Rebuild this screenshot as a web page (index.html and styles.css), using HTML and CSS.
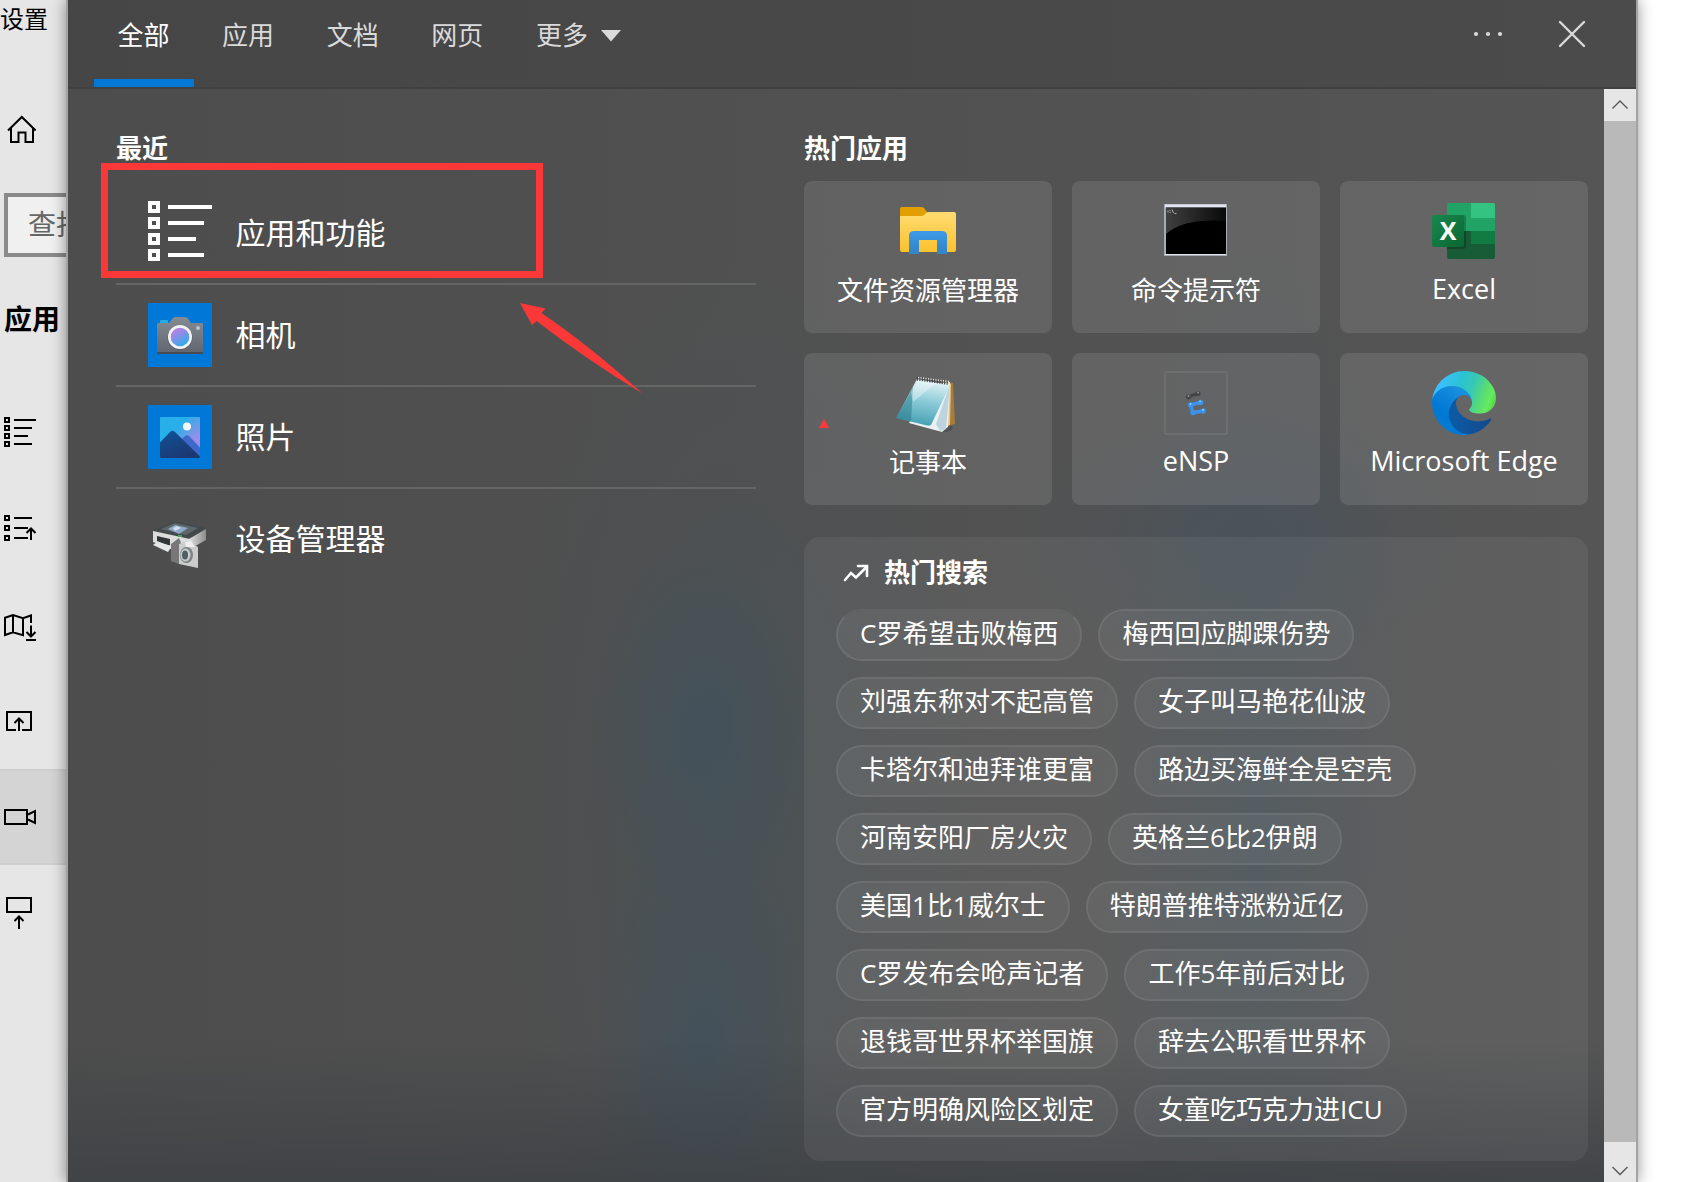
FILE: index.html
```html
<!DOCTYPE html>
<html lang="zh-CN">
<head>
<meta charset="utf-8">
<title>搜索</title>
<link rel="stylesheet" href="styles.css">
</head>
<body>
<aside class="settings">
  <div class="settings-title">设置</div>
  <svg class="home" width="40" height="40" viewBox="0 110 40 40"><path d="M8 130.5 21.8 117 35.6 130.5M11 128V142H18.500V132.500H25.500V142H33V128"/></svg>
  <div class="find">查找</div>
  <h2 class="settings-heading">应用</h2>
  <nav class="side-nav">
    <a class="side-item"><svg width="40" height="96" viewBox="0 385 40 96"><path d="M5 418h4v4h-4zM5 426h4v4h-4zM5 434h4v4h-4zM5 442h4v4h-4zM14 420h22M14 428h18M14 436h14M14 444h18"/></svg></a>
    <a class="side-item"><svg width="40" height="96" viewBox="0 481 40 96"><path d="M5 516h4v4h-4zM5 526h4v4h-4zM5 536h4v4h-4zM14 518h18M14 528h14M14 538h14M31 540V529M26.500 533 31 528.500 35.500 533"/></svg></a>
    <a class="side-item"><svg width="40" height="96" viewBox="0 577 40 96"><path d="M31 623V615.500L23 618.200 13 615 5 617.800V635L13 632.200 23 635.200V618M13 615V632M31 625.500V636M26.500 632 31 636.500 35.500 632M26 640H36"/></svg></a>
    <a class="side-item"><svg width="40" height="96" viewBox="0 673 40 96"><path d="M16 730H7V712H31V730H22M19 731V719M14.500 723 19 718.500 23.500 723"/></svg></a>
    <a class="side-item selected"><svg width="40" height="96" viewBox="0 769 40 96"><path d="M5 810H27V824H5ZM28 814.500 35 811V823L28 819.500"/></svg></a>
    <a class="side-item"><svg width="40" height="96" viewBox="0 865 40 96"><path d="M7 898H31V912H7ZM19 929V917M14.500 921 19 916.500 23.500 921"/></svg></a>
  </nav>
</aside>

<main class="search-panel">
  <header class="tabs">
    <a class="tab active">全部</a>
    <a class="tab">应用</a>
    <a class="tab">文档</a>
    <a class="tab">网页</a>
    <a class="tab">更多<svg class="caret" width="20" height="12" viewBox="0 0 20 12"><path d="M0 0H20L10 11.500Z"/></svg></a>
    <span class="spacer"></span>
    <svg class="window-tools" width="120" height="40" viewBox="1470 14 120 40"><circle cx="1476" cy="34" r="2.100"/><circle cx="1488" cy="34" r="2.100"/><circle cx="1500" cy="34" r="2.100"/><path d="M1560 22 1584 46M1584 22 1560 46"/></svg>
  </header>
  <div class="body">
    <section class="recent">
      <h2>最近</h2>
      <ul>
        <li><svg width="64" height="64" viewBox="148 201 64 64"><path fill="none" stroke="#fff" stroke-width="4" d="M150 203h8v8h-8zM150 219h8v8h-8zM150 235h8v8h-8zM150 251h8v8h-8zM168 207h44M168 223h36M168 239h28M168 255h36"/></svg><span>应用和功能</span></li>
        <li><svg width="64" height="64" viewBox="0 0 64 64">
          <defs>
            <linearGradient id="cam" x2="0" y2="1"><stop stop-color="#858b93"/><stop offset="1" stop-color="#62676f"/></linearGradient>
            <linearGradient id="lens" x1=".2" y1="0" x2=".8" y2="1"><stop offset=".15" stop-color="#b580e4"/><stop offset="1" stop-color="#22b2ee"/></linearGradient>
          </defs>
          <path fill="#0078d7" d="M0 0h64v64H0z"/><rect x="12" y="17" width="8" height="6" rx="1" fill="#29aae6"/>
          <path fill="url(#cam)" d="M10 20H21L25 15Q26 14 27.500 14H37Q38.500 14 39.500 15L43 20H54Q55 20 55 21V50H9V21Q9 20 10 20Z"/><path fill="#484c52" d="M9 49h46v1q0 1-1 1H10q-1 0-1-1z"/>
          <circle cx="32" cy="35" r="12.500" fill="#555b64" opacity=".6"/><circle cx="32" cy="34" r="12" fill="#f3f3f4"/><circle cx="32" cy="34" r="9.300" fill="url(#lens)"/><circle cx="50" cy="25" r="2" fill="#b9c3cc"/></svg><span>相机</span></li>
        <li><svg width="64" height="64" viewBox="0 0 64 64">
          <defs>
            <linearGradient id="sky" x2="1" y2="1"><stop offset=".35" stop-color="#28afea"/><stop offset=".75" stop-color="#a48ae6"/></linearGradient>
            <linearGradient id="hill" x2=".5" y2="1"><stop stop-color="#0f5396"/><stop offset="1" stop-color="#1c3873"/></linearGradient>
          </defs>
          <path fill="#0078d7" d="M0 0h64v64H0z"/><rect x="12" y="12" width="40" height="41" rx="1" fill="url(#sky)"/>
          <path fill="#3f68cb" d="M28 40 36.500 31.500Q39 29 41.500 31.500L52 42.500V52H40Z"/>
          <path fill="url(#hill)" d="M12 37.500 22 27Q24.500 24.500 27 27L52 51.500Q52 53 51 53H13Q12 53 12 52Z"/><circle cx="39" cy="21.500" r="4" fill="#f3f7fb"/></svg><span>照片</span></li>
        <li><svg class="device" width="64" height="64" viewBox="0 0 64 64">
          <defs><linearGradient id="metal"><stop stop-color="#e2e2e2"/><stop offset="1" stop-color="#8c8c8c"/></linearGradient></defs>
          <path fill="#434a4d" d="M6 23 26 14 58 21 42 33Z"/><path fill="#5d686b" d="M13 22 27 16 50 21 38 28Z"/><path fill="#8fa9c6" d="M20 22 27 18 40 21 31 27Z"/><path fill="#cfe2f3" d="M25 21 29 19 33 21 27 24Z"/>
          <path fill="#dcdcdc" d="M5 24 42 32V43L22 42 5 35Z"/><path fill="url(#metal)" d="M41 32 58 22V33L42 42Z"/><path fill="#303638" d="M9 29 22 32V39L9 34Z"/><path fill="#e4e7e8" d="M9 35 24 39 20 45 5 38Z"/><path fill="#49a451" d="M30 28h4v2h-4z"/>
          <path fill="#777" d="M23 37 31 31 33 36 31 57 23 54Z"/><path fill="#ccc" d="M31 37 39 34 50 40V61L31 57Z"/><path fill="#eee" d="M37 35 43 34 47 40H38Z"/>
          <ellipse cx="38.500" cy="48" rx="6.500" ry="8" fill="#7d8383"/><ellipse cx="37.500" cy="48" rx="5" ry="6.500" fill="#c9cdcd"/><ellipse cx="37" cy="48" rx="3" ry="4.500" fill="#4f6064"/></svg><span>设备管理器</span></li>
      </ul>
    </section>
    <section class="popular">
      <h2>热门应用</h2>
      <div class="tiles">
        <a class="tile"><svg width="64" height="64" viewBox="896 199 64 64">
          <defs><linearGradient id="fold" x2="0" y2="1"><stop stop-color="#ffdc72"/><stop offset="1" stop-color="#fbc12d"/></linearGradient><linearGradient id="clip" x2="0" y2="1"><stop stop-color="#3c9ae6"/><stop offset="1" stop-color="#3383c5"/></linearGradient></defs>
          <path fill="#e2a000" d="M900 209q0-2 2-2h19q2 0 3 1l3 4v7h-27z"/><path fill="url(#fold)" d="M900 216H921Q923 216 924 215L926 213Q927 212 929 212H954Q956 212 956 214V250Q956 252 954 252H902Q900 252 900 250Z"/>
          <path fill="url(#clip)" d="M909 254V236Q909 231 914 231H942Q947 231 947 236V254H937V240H919V254Z"/></svg><span>文件资源管理器</span></a>
        <a class="tile"><svg width="64" height="64" viewBox="1164 199 64 64">
          <defs><linearGradient id="glare"><stop stop-color="#404040"/><stop offset="1" stop-color="#090909"/></linearGradient></defs>
          <path fill="#a7abb2" d="M1164 204h63v52h-63z"/><path fill="#e3e6f1" d="M1165 204.500h61v3h-61zM1165 254h61v1h-61z"/><path d="M1166 207.500h60V254h-60z"/><path fill="url(#glare)" d="M1166 208h60V221Q1184 218 1166 234Z"/><path stroke="#ccc" stroke-width=".8" fill="none" d="M1168 210.500v2M1170 210v1M1170 212v1M1172 209.500l1.500 3.500M1174.500 213.500h2"/></svg><span>命令提示符</span></a>
        <a class="tile latin"><svg width="64" height="64" viewBox="1432 199 64 64">
          <defs><linearGradient id="xl" x2="1" y2="1"><stop stop-color="#18884f"/><stop offset="1" stop-color="#0b6631"/></linearGradient></defs>
          <path fill="#185c37" d="M1447 229h48v28q0 2-2 2h-44q-2 0-2-2z"/><path fill="#21a366" d="M1447 205q0-2 2-2h22v28h-24z"/><path fill="#33c481" d="M1471 203h22q2 0 2 2v13h-24z"/><path fill="#21a366" d="M1471 218h24v13h-24z"/><path fill="#107c41" d="M1471 231h24v13h-24z"/><path fill="#185c37" d="M1447 231h24v26h-24z"/>
          <path fill="#000" opacity=".22" d="M1447 215h16q3 0 3 3v28q0 3-3 3h-16z"/><rect x="1432" y="215" width="32" height="32" rx="2" fill="url(#xl)"/><text x="1448" y="240" text-anchor="middle" class="excel-x">X</text></svg><span>Excel</span></a>
        <a class="tile"><svg width="64" height="64" viewBox="896 371 64 64">
          <defs><linearGradient id="note" x1=".5" y1="0" x2=".3" y2="1"><stop stop-color="#e3f2f6"/><stop offset=".45" stop-color="#8ccbd7"/><stop offset="1" stop-color="#3f9eb0"/></linearGradient></defs>
          <ellipse cx="943" cy="428" rx="10" ry="4" fill="#333" opacity=".35"/><path fill="#a77c3d" d="M941 381 953 383 955 424 948 426Z"/><path fill="#e7c67c" d="M948 383 951 384 950 425 947 426Z"/><path fill="#e9f1f4" d="M950 382 948 427 942 432 909 423 930 385Z"/><path fill="#bfd3dc" d="M950 384 946 429 940 431 936 424Z"/>
          <path fill="url(#note)" d="M917 379 950 385 931 425Q929 426 925 425L896 418Z"/><path fill="#1f7283" opacity=".45" d="M913 387 911 421 896 418Z"/><path fill="#fff" opacity=".35" d="M918 380 936 383 913 402 911 392Z"/>
          <path fill="none" stroke="#444" stroke-width="4" stroke-dasharray="1.200 1.300" d="M917 378.500 949 383"/><path fill="none" stroke="#e5e5e5" stroke-width="1.500" stroke-dasharray="1.200 1.300" d="M918 377.500 949 381.500"/></svg><span>记事本</span></a>
        <a class="tile latin"><svg width="64" height="64" viewBox="1164 371 64 64">
          <rect x="1165" y="372" width="62" height="62" rx="1" fill="none" stroke="#fff" stroke-opacity=".07" stroke-width="2"/>
          <g stroke-linecap="round" fill="none"><path stroke="#444" stroke-width="3" d="M1189 396.500 1198 393.500"/><path stroke="#444" stroke-width="5" d="M1188.500 397h.1M1198 393.500h.1"/><path stroke="#999" stroke-width="1.800" d="M1188.500 396h.1M1198 392.500h.1"/><path stroke="#3c92ea" stroke-width="3.500" d="M1200 402.500 1190.500 405 1193 412.500 1203 411"/><path stroke="#3c92ea" stroke-width="5.500" d="M1200.500 402.500h.1M1190.800 405h.1M1193 412.500h.1M1203 411h.1"/><path stroke="#8cc6ff" stroke-width="2" d="M1200 401.500h.1M1190.500 404h.1M1203 410h.1"/></g></svg><span>eNSP</span></a>
        <a class="tile latin"><svg width="64" height="64" viewBox="0 0 256 256">
          <defs>
            <linearGradient id="e1" x1=".2" x2="1"><stop stop-color="#0d59a4"/><stop offset="1" stop-color="#114a8b"/></linearGradient>
            <linearGradient id="e2" x1=".9" y1="0" x2=".25" y2="1"><stop stop-color="#1b9de2"/><stop offset=".25" stop-color="#168ddd"/><stop offset=".7" stop-color="#0078d4"/><stop offset="1" stop-color="#067cd3"/></linearGradient>
            <linearGradient id="e3" x1="0" y1=".35" x2="1" y2=".6"><stop stop-color="#35c1f1"/><stop offset=".1" stop-color="#3cbfff"/><stop offset=".4" stop-color="#2bc3d2"/><stop offset=".6" stop-color="#36c8b5"/><stop offset=".8" stop-color="#58dc74"/><stop offset=".93" stop-color="#66eb5e"/><stop offset="1" stop-color="#58d94f"/></linearGradient>
          </defs>
          <g transform="translate(-4.63 -4.92)"><path fill="url(#e1)" d="M235.680 195.460a93.730 93.730 0 0 1-10.540 4.710 101.870 101.870 0 0 1-35.900 6.460c-47.320 0-88.540-32.550-88.540-74.320A31.480 31.480 0 0 1 117.130 105c-42.800 1.800-53.800 46.400-53.800 72.530 0 73.880 68.090 81.370 82.760 81.370 7.910 0 19.840-2.300 27-4.560l1.310-.44a128.340 128.340 0 0 0 66.600-52.800 4 4 0 0 0-5.320-5.640Z"/>
          <path fill="url(#e2)" d="M110.340 246.340A79.200 79.200 0 0 1 87.600 225a80.720 80.720 0 0 1 29.530-120c3.120-1.470 8.450-4.130 15.540-4a32.350 32.350 0 0 1 25.690 13 31.880 31.880 0 0 1 6.360 18.660c0-.21 24.460-79.600-80-79.600-43.900 0-80 41.660-80 78.210a130.150 130.150 0 0 0 12.110 56 128 128 0 0 0 156.380 67.110 75.550 75.550 0 0 1-62.780-8Z"/>
          <path fill="url(#e3)" d="M156.940 153.780c-.81 1.050-3.300 2.500-3.300 5.660 0 2.610 1.700 5.120 4.720 7.230 14.380 10 41.490 8.680 41.560 8.680a59.560 59.560 0 0 0 30.270-8.350 61.380 61.380 0 0 0 30.430-52.880c.26-22.410-8-37.310-11.340-43.910C228.090 28.760 182.350 4.920 132.610 4.920a128 128 0 0 0-128 126.200c.48-36.540 36.800-66.050 80-66.050 3.500 0 23.460.34 42 10.070 16.340 8.580 24.900 18.940 30.850 29.210 6.180 10.670 7.280 24.150 7.280 29.520s-2.740 13.330-7.800 19.910Z"/></g></svg><span>Microsoft Edge</span></a>
      </div>
      <div class="trending">
        <h3><svg width="28" height="24" viewBox="843 561 28 24"><path d="M845 580 851 573 856 577.500 866.500 567M858 566H867V576"/></svg>热门搜索</h3>
        <div class="pill-row"><a class="pill hovered">C罗希望击败梅西</a><a class="pill">梅西回应脚踝伤势</a></div>
        <div class="pill-row"><a class="pill">刘强东称对不起高管</a><a class="pill">女子叫马艳花仙波</a></div>
        <div class="pill-row"><a class="pill">卡塔尔和迪拜谁更富</a><a class="pill">路边买海鲜全是空壳</a></div>
        <div class="pill-row"><a class="pill">河南安阳厂房火灾</a><a class="pill">英格兰6比2伊朗</a></div>
        <div class="pill-row"><a class="pill">美国1比1威尔士</a><a class="pill">特朗普推特涨粉近亿</a></div>
        <div class="pill-row"><a class="pill">C罗发布会呛声记者</a><a class="pill">工作5年前后对比</a></div>
        <div class="pill-row"><a class="pill">退钱哥世界杯举国旗</a><a class="pill">辞去公职看世界杯</a></div>
        <div class="pill-row"><a class="pill">官方明确风险区划定</a><a class="pill">女童吃巧克力进ICU</a></div>
      </div>
    </section>
    <div class="scrollbar">
      <svg class="scroll-up" width="32" height="32" viewBox="0 0 32 32"><path d="M8.500 19.500 16 12 23.500 19.500"/></svg>
      <span class="thumb"></span>
      <svg class="scroll-down" width="32" height="40" viewBox="0 0 32 40"><path d="M8.500 25 16 32.500 23.500 25"/></svg>
    </div>
  </div>
</main>

<svg class="annotations" width="1693" height="1182" viewBox="0 0 1693 1182"><path fill="none" stroke="#fb3838" stroke-width="7" d="M104.500 166.500H539.500V274.500H104.500Z"/><path fill="#fb3838" d="M520 303 545.500 308.500 541.500 313 Q590 346 642.500 393.500 Q587 360 536.500 321L532 325ZM824 418.500 829 428H819Z"/></svg>
</body>
</html>
```

FILE: styles.css
```css
* { box-sizing: border-box; }

body {
  margin: 0;
  width: 1693px;
  height: 1182px;
  overflow: hidden;
  display: flex;
  background: #fff;
  color: #fff;
  font-family: "Open Sans", "Noto Sans CJK SC", sans-serif;
  font-size: 26px;
}

h2, h3, ul { margin: 0; padding: 0; font-size: 26px; }
svg { display: block; flex: none; }

/* settings window behind the search panel */
.settings {
  width: 66px;
  flex: none;
  height: 1182px;
  overflow: hidden;
  background: #e6e6e6;
  color: #000;
  white-space: nowrap;
}
.settings-title { height: 110px; line-height: 37px; font-size: 24px; }
.settings svg { fill: none; stroke: #000; stroke-width: 2; }
.find {
  margin: 43px 0 0 4px;
  width: 300px;
  height: 64px;
  padding-left: 20px;
  border: 4px solid #8a8a8a;
  background: #f0f0f0;
  color: #666;
  font-size: 28px;
  line-height: 54px;
}
.settings-heading { height: 128px; padding: 35px 0 0 4px; font-size: 28px; line-height: 54px; }
.side-item { display: block; height: 96px; }
.side-item.selected { background: #d4d4d4; box-shadow: inset 0 2px #cecece, inset 0 -2px #cecece; }

/* search panel */
.search-panel {
  position: relative;
  flex: none;
  width: 1572px;
  height: 1182px;
  border: solid #a3a3a3;
  border-width: 0 2px;
  box-shadow: 0 0 14px rgba(0, 0, 0, .42);
  display: flex;
  flex-direction: column;
  background:
    linear-gradient(to bottom, rgba(60, 64, 68, 0) 1040px, rgba(60, 64, 68, .75) 1182px),
    radial-gradient(ellipse 110px 190px at 635px 730px, rgba(61, 81, 96, .6), transparent),
    radial-gradient(ellipse 110px 260px at 635px 1060px, rgba(61, 81, 96, .6), transparent),
    radial-gradient(ellipse 240px 560px at 670px 820px, rgba(70, 83, 88, .5), transparent),
    radial-gradient(ellipse 230px 130px at 1175px 540px, rgba(70, 82, 94, .5), transparent),
    radial-gradient(ellipse 160px 600px at 1190px 840px, rgba(70, 82, 92, .6), transparent),
    linear-gradient(to right, #4d4d4d, #505050 40%, #555);
}
.tabs {
  height: 89px;
  flex: none;
  display: flex;
  gap: 4.600px;
  padding-left: 26px;
  background: linear-gradient(to right, #464646, #4b4b4b);
  border-bottom: 2px solid #404040;
}
.tab {
  display: flex;
  height: 87px;
  padding: 0 24.500px 0 23.500px;
  line-height: 70px;
  color: #dadada;
}
.tab.active { color: #fff; border-bottom: 8px solid #0078d7; }
.caret { margin: 30px 0 0 13px; fill: #dadada; }
.spacer { flex: 1; }
.window-tools { margin: 14px 46px 0 0; fill: #dadada; stroke: none; }
.window-tools path { stroke: #dadada; stroke-width: 2.400; stroke-linecap: round; }

.body { flex: 1; display: flex; min-height: 0; }

.recent { width: 640px; margin-left: 48px; flex: none; }
.recent h2, .popular h2 { height: 92px; padding-top: 40px; line-height: 38px; }
.recent h2 { height: 94px; }
.recent li {
  display: flex;
  align-items: center;
  gap: 23.500px;
  height: 102px;
  padding-left: 32px;
  border-bottom: 2px solid #646666;
  font-size: 30px;
  line-height: 44px;
}
.recent li:last-child { border-color: transparent; }
.device { filter: blur(.6px); }

.popular { width: 784px; margin-left: 48px; flex: none; }
.tiles { display: grid; grid-template-columns: repeat(3, 248px); gap: 20px; }
.tile {
  height: 152px;
  padding-top: 18px;
  display: flex;
  flex-direction: column;
  align-items: center;
  gap: 7.500px;
  border-radius: 8px;
  background: rgba(255, 255, 255, .1);
  line-height: 38px;
}
.tile.latin { font-size: 27px; gap: 7px; }
.excel-x { font: bold 25px "Open Sans", sans-serif; fill: #fff; }

.trending {
  margin-top: 32px;
  height: 624px;
  padding: 16px 32px;
  border-radius: 16px;
  background: rgba(255, 255, 255, .06);
}
.trending h3 { display: flex; align-items: center; gap: 13px; height: 40px; margin-bottom: 16px; padding-left: 7px; line-height: 36px; padding-bottom: 3px; }
.trending h3 svg { margin-top: 3px; fill: none; stroke: #fff; stroke-width: 2.600; stroke-linecap: round; }
.pill-row { display: flex; gap: 16px; margin-bottom: 16px; }
.pill {
  height: 52px;
  padding: 0 22px;
  line-height: 44px;
  white-space: nowrap;
  border: 2px solid rgba(255, 255, 255, .12);
  border-radius: 26px;
  background: rgba(255, 255, 255, .05);
  background-clip: padding-box;
}
.pill.hovered { border-top-color: rgba(255, 255, 255, .05); }

.scrollbar { width: 32px; margin-left: 16px; display: flex; flex-direction: column; background: #e6e6e6; }
.scrollbar svg { fill: none; stroke: #555; stroke-width: 1.300; }
.thumb { flex: 1; background: #b9b9b9; }

/* red markup drawn over the screen */
.annotations { position: absolute; left: 0; top: 0; pointer-events: none; }
```
